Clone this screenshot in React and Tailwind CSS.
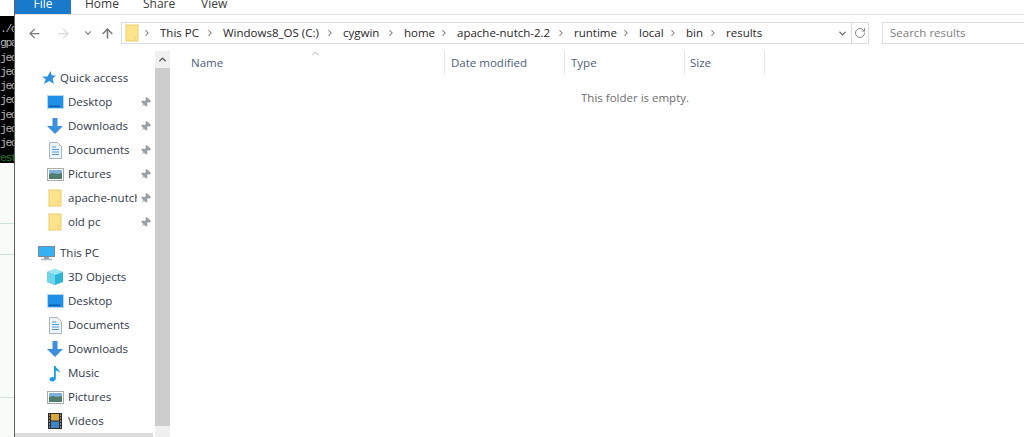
import { ArrowLeft, ArrowRight, ArrowUp, ChevronDown, ChevronRight, ChevronUp, RotateCw, Pin } from 'lucide-react'

const ui = { fontFamily: '"Open Sans", sans-serif' }

const Folder = () => (
  <svg width="14" height="18" viewBox="0 0 14 18">
    <rect x="1" y="1" width="12" height="16" fill="#fde48d" stroke="#eccd6a" />
    <path d="M10 17v-4h3" fill="#fff3c0" stroke="#eccd6a" />
  </svg>
)
const Screen = () => (
  <svg width="17" height="14" viewBox="0 0 17 14">
    <rect x="0.5" y="0.5" width="16" height="13" fill="#1e90e8" stroke="#b9d8ef" />
    <rect x="2" y="10.5" width="11" height="1.5" fill="#0b5fb0" />
  </svg>
)
const Down = () => (
  <svg width="16" height="16" viewBox="0 0 16 16">
    <path d="M5.5 0h5v8H16l-8 8-8-8h5.500z" fill="#3c8fdc" />
  </svg>
)
const Doc = () => (
  <svg width="13" height="17" viewBox="0 0 13 17">
    <path d="M.5.5h8l4 4v12H.500z" fill="#eef3f8" stroke="#a9b4be" />
    <path d="M3 5h4M3 7.500h7M3 10h7M3 12.500h7" stroke="#4a9ad8" />
  </svg>
)
const Pics = () => (
  <svg width="17" height="13" viewBox="0 0 17 13">
    <rect x="0.5" y="0.5" width="16" height="12" fill="#fff" stroke="#a9adb2" />
    <rect x="2" y="2" width="13" height="4" fill="#7fb0dc" />
    <path d="M2 6l4-1 4 1 5-1v6H2z" fill="#4f7f6a" />
  </svg>
)
const Monitor = () => (
  <svg width="17" height="15" viewBox="0 0 17 15">
    <rect x="0.5" y="0.5" width="16" height="10" fill="#35b0f2" stroke="#7a8a96" />
    <path d="M6 11h5v2H6z" fill="#8fa3b2" />
    <path d="M3 13.500h11" stroke="#a9b9c6" strokeWidth="1.500" />
  </svg>
)
const Cube = () => (
  <svg width="16" height="16" viewBox="0 0 16 16">
    <path d="M8 0l8 3v10l-8 3-8-3V3z" fill="#2cb5d8" />
    <path d="M0 3l8 3 8-3-8-3z" fill="#9be6f4" />
    <path d="M0 3l8 3v10l-8-3z" fill="#6fd6ea" />
  </svg>
)
const Note = () => (
  <svg width="12" height="17" viewBox="0 0 12 17">
    <path d="M5 1h1.600c.4 3 4.400 3.500 4.400 7-1-1.500-2.600-2.300-4.200-2.500V13.500c0 2-1.800 3-3.500 3C1.500 16.500.5 15.500.5 14.300.5 12.800 2 12 3.300 12c.7 0 1.300.1 1.700.4z" fill="#1c9bea" />
  </svg>
)
const Film = () => (
  <svg width="14" height="16" viewBox="0 0 14 16">
    <rect width="14" height="16" fill="#2d2d2d" />
    <rect x="3" y="1" width="8" height="6.500" fill="#d8a93a" />
    <rect x="3" y="8.500" width="8" height="6.500" fill="#3f86c8" />
    <path d="M1 2h1M1 5h1M1 8h1M1 11h1M1 14h1M12 2h1M12 5h1M12 8h1M12 11h1M12 14h1" stroke="#ddd" />
  </svg>
)
const Star = () => (
  <svg width="14" height="14" viewBox="0 0 14 14">
    <path d="M8.500 0l1.300 4.500H14l-3.400 3 1.300 5.500-4.400-3L2 13l1.700-4.700L0 5.500h5.500z" fill="#2f8fe0" />
  </svg>
)

const quick = [
  { label: 'Desktop', icon: <Screen /> },
  { label: 'Downloads', icon: <Down /> },
  { label: 'Documents', icon: <Doc /> },
  { label: 'Pictures', icon: <Pics /> },
  { label: 'apache-nutch-2.2', icon: <Folder /> },
  { label: 'old pc', icon: <Folder /> },
]

const thisPc = [
  { label: '3D Objects', icon: <Cube /> },
  { label: 'Desktop', icon: <Screen /> },
  { label: 'Documents', icon: <Doc /> },
  { label: 'Downloads', icon: <Down /> },
  { label: 'Music', icon: <Note /> },
  { label: 'Pictures', icon: <Pics /> },
  { label: 'Videos', icon: <Film /> },
]

const crumbs = [
  { label: 'This PC', width: 'w-[63px]' },
  { label: 'Windows8_OS (C:)', width: 'w-[120px]' },
  { label: 'cygwin', width: 'w-[61px]' },
  { label: 'home', width: 'w-[53px]' },
  { label: 'apache-nutch-2.2', width: 'w-[117px]' },
  { label: 'runtime', width: 'w-[65px]' },
  { label: 'local', width: 'w-[47px]' },
  { label: 'bin', width: 'w-[40px]' },
  { label: 'results', width: 'w-[50px]' },
]

const terminal = ['./c', 'gpa', 'jec', 'jec', 'jec', 'jec', 'jec', 'jec', 'jec']

function NavRow({ item, pinned }) {
  return (
    <div className="flex h-6 items-center pl-[31px]">
      <div className="mr-[4px] flex w-[18px] shrink-0 justify-center">{item.icon}</div>
      <span className="w-[69px] shrink-0 overflow-hidden whitespace-nowrap text-[11.5px] text-[#2f3a4a]">{item.label}</span>
      {pinned && <Pin size={11} strokeWidth={1.5} className="ml-[3px] rotate-45 fill-[#9aa0a8] text-[#8a9098]" />}
    </div>
  )
}

export default function App() {
  return (
    <div className="flex h-[437px] w-[1024px] overflow-hidden bg-white" style={ui}>
      <div className="flex w-[14px] shrink-0 flex-col bg-[#f8fbf8]">
        <div className="h-[16px] bg-white" />
        <div className="h-[147px] overflow-hidden bg-black pt-[6px] font-['Liberation_Mono',monospace] text-[11.5px] leading-[14.3px] tracking-[-1.5px] text-[#b4b4b4]">
          {terminal.map((t, i) => (
            <div key={i} className="whitespace-nowrap">{t}</div>
          ))}
          <div className="whitespace-nowrap text-[#1f7a30]">est</div>
        </div>
        <div className="mt-[60px] h-px bg-[#cfe3d2]" />
        <div className="mt-[30px] h-px bg-[#cfe3d2]" />
        <div className="mt-[142px] h-px bg-[#cfe3d2]" />
      </div>

      <div className="flex min-w-0 flex-1 flex-col border-l border-[#5f5f5f]">
        {/* ribbon tabs, cut off by the top of the picture */}
        <div className="flex h-[15px] shrink-0 border-b border-[#e3e3e3] text-[12px] leading-[8px] text-[#3b3b3b]">
          <div className="flex w-[56px] justify-center bg-[#1979ca] text-white">File</div>
          <div className="ml-[14px] w-[58px]">Home</div>
          <div className="w-[58px]">Share</div>
          <div>View</div>
        </div>

        {/* nav buttons, address, search */}
        <div className="flex h-[36px] shrink-0 items-center">
          <ArrowLeft size={15} strokeWidth={2} className="ml-[12px] text-[#7a7a7a]" />
          <ArrowRight size={15} strokeWidth={2} className="ml-[14px] text-[#d8d8d8]" />
          <ChevronDown size={10} strokeWidth={3} className="ml-[12px] text-[#8a8a8a]" />
          <ArrowUp size={15} strokeWidth={2.5} className="ml-[7px] text-[#7a7a7a]" />
          <div className="ml-[6px] flex h-[22px] w-[748px] shrink-0 items-center border border-[#dcdcdc]">
            <div className="ml-[3px] mr-[3px]"><Folder /></div>
            {crumbs.map((c) => (
              <div key={c.label} className={`flex shrink-0 items-center ${c.width}`}>
                <ChevronRight size={10} strokeWidth={2.5} className="mr-[8px] shrink-0 text-[#707070]" />
                <span className="whitespace-nowrap text-[11.5px] text-[#1f1f1f]">{c.label}</span>
              </div>
            ))}
            <div className="flex-1" />
            <ChevronDown size={11} strokeWidth={2.5} className="mr-[3px] text-[#606060]" />
            <div className="flex h-full w-[17px] items-center justify-center border-l border-[#dcdcdc]">
              <RotateCw size={12} strokeWidth={1.8} className="text-[#7a7a7a]" />
            </div>
          </div>
          <div className="ml-[13px] flex h-[22px] flex-1 items-center border border-y-[#dcdcdc] border-l-[#dcdcdc] border-r-0 pl-[7px] text-[11.5px] text-[#7d7d7d]">
            Search results
          </div>
        </div>

        <div className="flex min-h-0 flex-1">
          {/* nav pane */}
          <div className="relative w-[140px] shrink-0 pt-[15px]">
            <div className="flex h-6 items-center pl-[27px]">
              <Star />
              <span className="ml-[4px] text-[11.5px] text-[#2f3a4a]">Quick access</span>
            </div>
            {quick.map((item, i) => (
              <NavRow key={i} item={item} pinned />
            ))}
            <div className="mt-[7px] flex h-6 items-center pl-[23px]">
              <Monitor />
              <span className="ml-[5px] text-[11.5px] text-[#2f3a4a]">This PC</span>
            </div>
            {thisPc.map((item, i) => (
              <NavRow key={i} item={item} />
            ))}
            <div className="absolute bottom-0 left-0 h-[4px] w-[138px] bg-[#dcdcdc]" />
          </div>

          {/* scrollbar */}
          <div className="flex w-[15px] shrink-0 flex-col bg-[#f0f0f0]">
            <div className="flex h-[17px] shrink-0 items-center justify-center">
              <ChevronUp size={11} strokeWidth={3} className="text-[#505050]" />
            </div>
            <div className="h-[358px] bg-[#cdcdcd]" />
          </div>

          {/* file list */}
          <div className="min-w-0 flex-1">
            <div className="relative flex h-[24px] text-[11.5px] leading-[24px] text-[#4c607a]">
              <div className="w-[275px] border-r border-[#e5e5e5] pl-[21px]">Name</div>
              <ChevronUp size={11} strokeWidth={1.5} className="absolute left-[140px] top-[-3px] text-[#8a8a8a]" />
              <div className="w-[120px] border-r border-[#e5e5e5] pl-[6px]">Date modified</div>
              <div className="w-[120px] border-r border-[#e5e5e5] pl-[6px]">Type</div>
              <div className="w-[80px] border-r border-[#e5e5e5] pl-[5px]">Size</div>
            </div>
            <div className="mt-[14px] pl-[411px] text-[11.5px] text-[#6d6d6d]">This folder is empty.</div>
          </div>
        </div>
      </div>
    </div>
  )
}
